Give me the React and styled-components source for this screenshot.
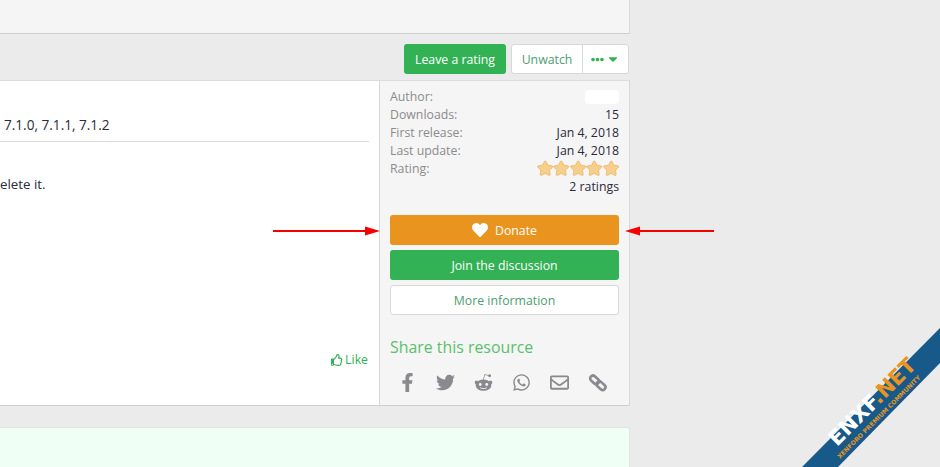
import React from "react";
import styled, { createGlobalStyle } from "styled-components";
import {
  FaCaretDown,
  FaEllipsisH,
  FaFacebookF,
  FaHeart,
  FaRedditAlien,
  FaRegEnvelope,
  FaRegThumbsUp,
  FaStar,
  FaTwitter,
  FaWhatsapp,
} from "react-icons/fa";

const Global = createGlobalStyle`
  html, body {
    margin: 0;
    background: #ebebeb;
    font-family: "Open Sans", "Noto Sans", sans-serif;
    font-size: 12.3px;
    color: #2a2a3a;
  }
`;

const Page = styled.div`
  position: relative;
  width: 940px;
  height: 467px;
  overflow: hidden;
`;

const Column = styled.div`
  width: 630px;
  display: flex;
  flex-direction: column;
`;

const TopBlock = styled.div`
  height: 34px;
  box-sizing: border-box;
  background: #f5f5f5;
  border-right: 1px solid #d8d8d8;
  border-bottom: 1px solid #cfcfcf;
`;

const Toolbar = styled.div`
  height: 46px;
  box-sizing: border-box;
  display: flex;
  justify-content: flex-end;
  align-items: flex-start;
  gap: 5px;
  padding: 10px 1px 0 0;
`;

const Button = styled.div`
  height: 30px;
  box-sizing: border-box;
  display: flex;
  align-items: center;
  justify-content: center;
  gap: 7px;
  border-radius: 3px;
  white-space: nowrap;
  color: ${({ $tone }) => ($tone === "light" ? "#4f9d72" : "#fff")};
  background: ${({ $tone }) =>
    $tone === "green" ? "#32b155" : $tone === "orange" ? "#e8941f" : "#fff"};
  border: ${({ $tone }) =>
    $tone === "light" ? "1px solid #d8d8d8" : "none"};
`;

const ToolButton = styled(Button)`
  width: ${({ $width }) => $width}px;
`;

const ButtonGroup = styled.div`
  display: flex;
  height: 30px;
  width: 118px;
  background: #fff;
  border: 1px solid #d8d8d8;
  border-radius: 3px;
  box-sizing: border-box;
`;

const GroupPart = styled.div`
  display: flex;
  align-items: center;
  justify-content: center;
  gap: 2px;
  flex: ${({ $grow }) => $grow};
  color: ${({ $icon }) => ($icon ? "#32b155" : "#4f9d72")};
  border-left: ${({ $icon }) => ($icon ? "1px solid #d8d8d8" : "none")};
`;

const Panel = styled.div`
  height: 326px;
  display: grid;
  grid-template-columns: 380px 249px;
  background: #f5f5f5;
  border-top: 1px solid #dcdcdc;
  border-right: 1px solid #d8d8d8;
  border-bottom: 1px solid #cfcfcf;
  box-sizing: border-box;
`;

const Main = styled.div`
  background: #fff;
  border-right: 1px solid #d8d8d8;
  padding-right: 10px;
  display: flex;
  flex-direction: column;
`;

const Versions = styled.div`
  height: 61px;
  box-sizing: border-box;
  padding: 34px 0 0 4px;
  font-size: 13.6px;
  line-height: 19px;
  border-bottom: 1px solid #dcdcdc;
`;

const Body = styled.div`
  margin-top: 33px;
  font-size: 13.3px;
  line-height: 19px;
  flex: 1;
`;

const Like = styled.div`
  display: flex;
  justify-content: flex-end;
  align-items: center;
  gap: 2px;
  margin: 0 1px 36px 0;
  color: #32b155;
  line-height: 18px;
`;

const Side = styled.div`
  padding: 7px 10px 0 10px;
  display: flex;
  flex-direction: column;
`;

const Row = styled.div`
  display: flex;
  justify-content: ${({ $end }) => ($end ? "flex-end" : "space-between")};
  height: 18px;
  line-height: 18px;
`;

const Term = styled.span`
  color: #8c8c8c;
`;

const Masked = styled.span`
  width: 34px;
  height: 14px;
  margin-top: 2px;
  background: #fff;
  border-radius: 4px;
`;

const Stars = styled.span`
  display: flex;
  align-items: center;
  margin-top: -2px;
  color: #f6cf8c;
  font-size: 16.4px;
  & svg {
    stroke: #e8a740;
    stroke-width: 20px;
  }
`;

const Actions = styled.div`
  display: flex;
  flex-direction: column;
  gap: 5px;
  margin-top: 19px;
`;

const ShareTitle = styled.div`
  margin-top: 20px;
  font-size: 15.9px;
  line-height: 24px;
  color: #5cbf6c;
`;

const ShareIcons = styled.div`
  display: flex;
  align-items: center;
  height: 24px;
  margin: 11px 0 0 -2px;
  color: #8a8a8e;
  font-size: 19px;
`;

const ShareIcon = styled.span`
  width: 38px;
  height: 24px;
  display: flex;
  align-items: center;
  justify-content: center;
  flex: none;
`;

const Gap = styled.div`
  height: 21px;
`;

const Notice = styled.div`
  height: 40px;
  background: #f0fff5;
  border: 1px solid #dfe9e2;
  border-left: none;
  border-bottom: none;
  border-radius: 0 3px 0 0;
`;

const Overlay = styled.svg`
  position: absolute;
  left: 0;
  top: 0;
  pointer-events: none;
`;

const ChainIcon = () => (
  <svg width="20" height="20" viewBox="0 0 20 20" fill="none" stroke="currentColor" strokeWidth="2.6">
    <rect x="-1" y="-2.8" width="10" height="5.6" rx="2.8" transform="translate(4.6 5.2) rotate(42)" />
    <rect x="-1" y="-2.8" width="10" height="5.6" rx="2.8" transform="translate(11 11) rotate(42)" />
  </svg>
);

const Arrow = ({ x1, x2, tip }) => (
  <g fill="#f40000">
    <rect x={x1} y="230" width={x2 - x1} height="2" />
    <polygon
      points={
        tip > x1
          ? `${tip},231 ${tip - 15},226.5 ${tip - 15},235.5`
          : `${tip},231 ${tip + 15},226.5 ${tip + 15},235.5`
      }
    />
  </g>
);

const links = [FaFacebookF, FaTwitter, FaRedditAlien, FaWhatsapp, FaRegEnvelope, ChainIcon];

export default function App() {
  return (
    <Page>
      <Global />
      <Column>
        <TopBlock />
        <Toolbar>
          <ToolButton $tone="green" $width={102}>
            Leave a rating
          </ToolButton>
          <ButtonGroup>
            <GroupPart $grow="0 0 70px">Unwatch</GroupPart>
            <GroupPart $grow="1" $icon>
              <FaEllipsisH size={13} />
              <FaCaretDown size={14} />
            </GroupPart>
          </ButtonGroup>
        </Toolbar>
        <Panel>
          <Main>
            <Versions>7.1.0, 7.1.1, 7.1.2</Versions>
            <Body>elete it.</Body>
            <Like>
              <FaRegThumbsUp size={12} />
              Like
            </Like>
          </Main>
          <Side>
            <Row>
              <Term>Author:</Term>
              <Masked />
            </Row>
            <Row>
              <Term>Downloads:</Term>
              <span>15</span>
            </Row>
            <Row>
              <Term>First release:</Term>
              <span>Jan 4, 2018</span>
            </Row>
            <Row>
              <Term>Last update:</Term>
              <span>Jan 4, 2018</span>
            </Row>
            <Row>
              <Term>Rating:</Term>
              <Stars>
                {[0, 1, 2, 3, 4].map((n) => (
                  <FaStar key={n} />
                ))}
              </Stars>
            </Row>
            <Row $end>2 ratings</Row>
            <Actions>
              <Button $tone="orange">
                <FaHeart size={16} />
                Donate
              </Button>
              <Button $tone="green">Join the discussion</Button>
              <Button $tone="light">More information</Button>
            </Actions>
            <ShareTitle>Share this resource</ShareTitle>
            <ShareIcons>
              {links.map((Icon, i) => (
                <ShareIcon key={i}>
                  <Icon />
                </ShareIcon>
              ))}
            </ShareIcons>
          </Side>
        </Panel>
        <Gap />
        <Notice />
      </Column>
      <Overlay width="940" height="467" viewBox="0 0 940 467">
        <Arrow x1={273} x2={368} tip={380} />
        <Arrow x1={636} x2={714} tip={625} />
        <polygon points="940,328 940,363 838,467 802,467" fill="#175a8a" />
        <text
          transform="translate(837 447) rotate(-45)"
          fontFamily="'DejaVu Sans', sans-serif"
          fontWeight="700"
          fontSize="21"
        >
          <tspan fill="#fff">ENXF</tspan>
          <tspan fill="#e8941f">.NET</tspan>
        </text>
        <text
          transform="translate(840 459) rotate(-45)"
          fontFamily="'DejaVu Sans', sans-serif"
          fontWeight="700"
          fontSize="6.2"
          fill="#e8941f"
        >
          XENFORO PREMIUM COMMUNITY
        </text>
      </Overlay>
    </Page>
  );
}
